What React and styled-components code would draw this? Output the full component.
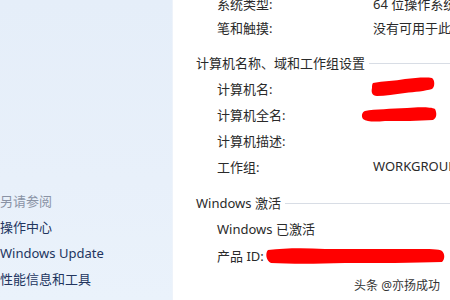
import React from 'react';
import styled, { createGlobalStyle } from 'styled-components';

const Global = createGlobalStyle`
  html, body {
    margin: 0;
    padding: 0;
    background: #fff;
  }
  body {
    font-family: "Noto Sans", "Noto Sans CJK SC", sans-serif;
    font-size: 13px;
    color: #2a2a2a;
  }
`;

const Window = styled.div`
  position: relative;
  display: flex;
  width: 450px;
  height: 300px;
  overflow: hidden;
`;

const Sidebar = styled.div`
  width: 173px;
  flex-shrink: 0;
  background: linear-gradient(180deg, #e5eef9 0%, #e8f0fa 60%, #eaf2fb 100%);
  border-right: 1px solid #eef3fa;
  display: flex;
  flex-direction: column;
  justify-content: flex-end;
  padding-bottom: 8px;
  box-sizing: border-box;
`;

const SideTitle = styled.div`
  height: 26px;
  line-height: 26px;
  color: #8a93a5;
`;

const SideLink = styled.div`
  height: 26px;
  line-height: 26px;
  color: #22355f;
  white-space: nowrap;
`;

const Main = styled.div`
  flex: 1;
  padding-left: 23px;
  margin-top: -9px;
  display: flex;
  flex-direction: column;
`;

const Row = styled.div`
  display: flex;
  align-items: center;
  height: ${p => p.h || 26}px;
  padding-left: 21px;
  white-space: nowrap;
`;

const Label = styled.div`
  width: ${p => (p.auto ? 'auto' : '156px')};
  flex-shrink: 0;
`;

const Value = styled.div`
  display: flex;
  align-items: center;
`;

const Header = styled.div`
  display: flex;
  align-items: center;
  height: 26px;
  margin-top: ${p => p.mt}px;
  white-space: nowrap;
  &::after {
    content: '';
    flex: 1;
    height: 1px;
    margin-left: 4px;
    margin-top: 3px;
    background: #d8dde5;
  }
`;

const Watermark = styled.div`
  position: absolute;
  right: 10px;
  bottom: 6px;
  font-size: 12px;
  color: #333;
  text-shadow: 0 0 2px #fff;
`;

const Scribble = ({ w, h, d, style }) => (
  <svg width={w} height={h} viewBox={`0 0 ${w} ${h}`} style={style}>
    <path d={d} fill="#f00" />
  </svg>
);

export default function App() {
  return (
    <>
      <Global />
      <Window>
        <Sidebar>
          <SideTitle>另请参阅</SideTitle>
          <SideLink>操作中心</SideLink>
          <SideLink>Windows Update</SideLink>
          <SideLink>性能信息和工具</SideLink>
        </Sidebar>
        <Main>
          <Row h={24}>
            <Label>系统类型:</Label>
            <Value>64 位操作系统</Value>
          </Row>
          <Row h={24}>
            <Label>笔和触摸:</Label>
            <Value>没有可用于此显示器的笔或触控输入</Value>
          </Row>
          <Header mt={10}>计算机名称、域和工作组设置</Header>
          <Row>
            <Label>计算机名:</Label>
            <Value>
              <Scribble
                w={64}
                h={20}
                style={{ marginLeft: -2, marginTop: -2 }}
                d="M2 6 C12 4 24 4 34 2 C44 1 54 0 61 1 C64 3 64 10 61 12 C54 14 44 15 34 16 C24 17 14 19 6 19 C1 19 0 15 1 11 C1 9 1 7 2 6 Z"
              />
            </Value>
          </Row>
          <Row>
            <Label>计算机全名:</Label>
            <Value>
              <Scribble
                w={76}
                h={15}
                style={{ marginLeft: -12 }}
                d="M4 4 C14 2 30 2 46 1 C58 0 70 0 74 2 C76 6 76 11 72 13 C58 14 40 14 24 14 C14 15 6 15 2 12 C0 9 1 5 4 4 Z"
              />
            </Value>
          </Row>
          <Row>
            <Label>计算机描述:</Label>
          </Row>
          <Row>
            <Label>工作组:</Label>
            <Value>WORKGROUP</Value>
          </Row>
          <Header mt={10}>Windows 激活</Header>
          <Row h={27}>
            <Label auto>Windows 已激活</Label>
          </Row>
          <Row h={27}>
            <Label auto>产品 ID:</Label>
            <Value>
              <Scribble
                w={180}
                h={17}
                style={{ marginLeft: 1 }}
                d="M3 3 C20 1 40 1 60 2 C90 2 120 2 150 2 C165 2 174 2 177 4 C180 7 180 12 177 15 C150 16 110 16 80 16 C50 17 25 17 6 16 C1 14 0 6 3 3 Z"
              />
            </Value>
          </Row>
        </Main>
        <Watermark>头条 @亦扬成功</Watermark>
      </Window>
    </>
  );
}
